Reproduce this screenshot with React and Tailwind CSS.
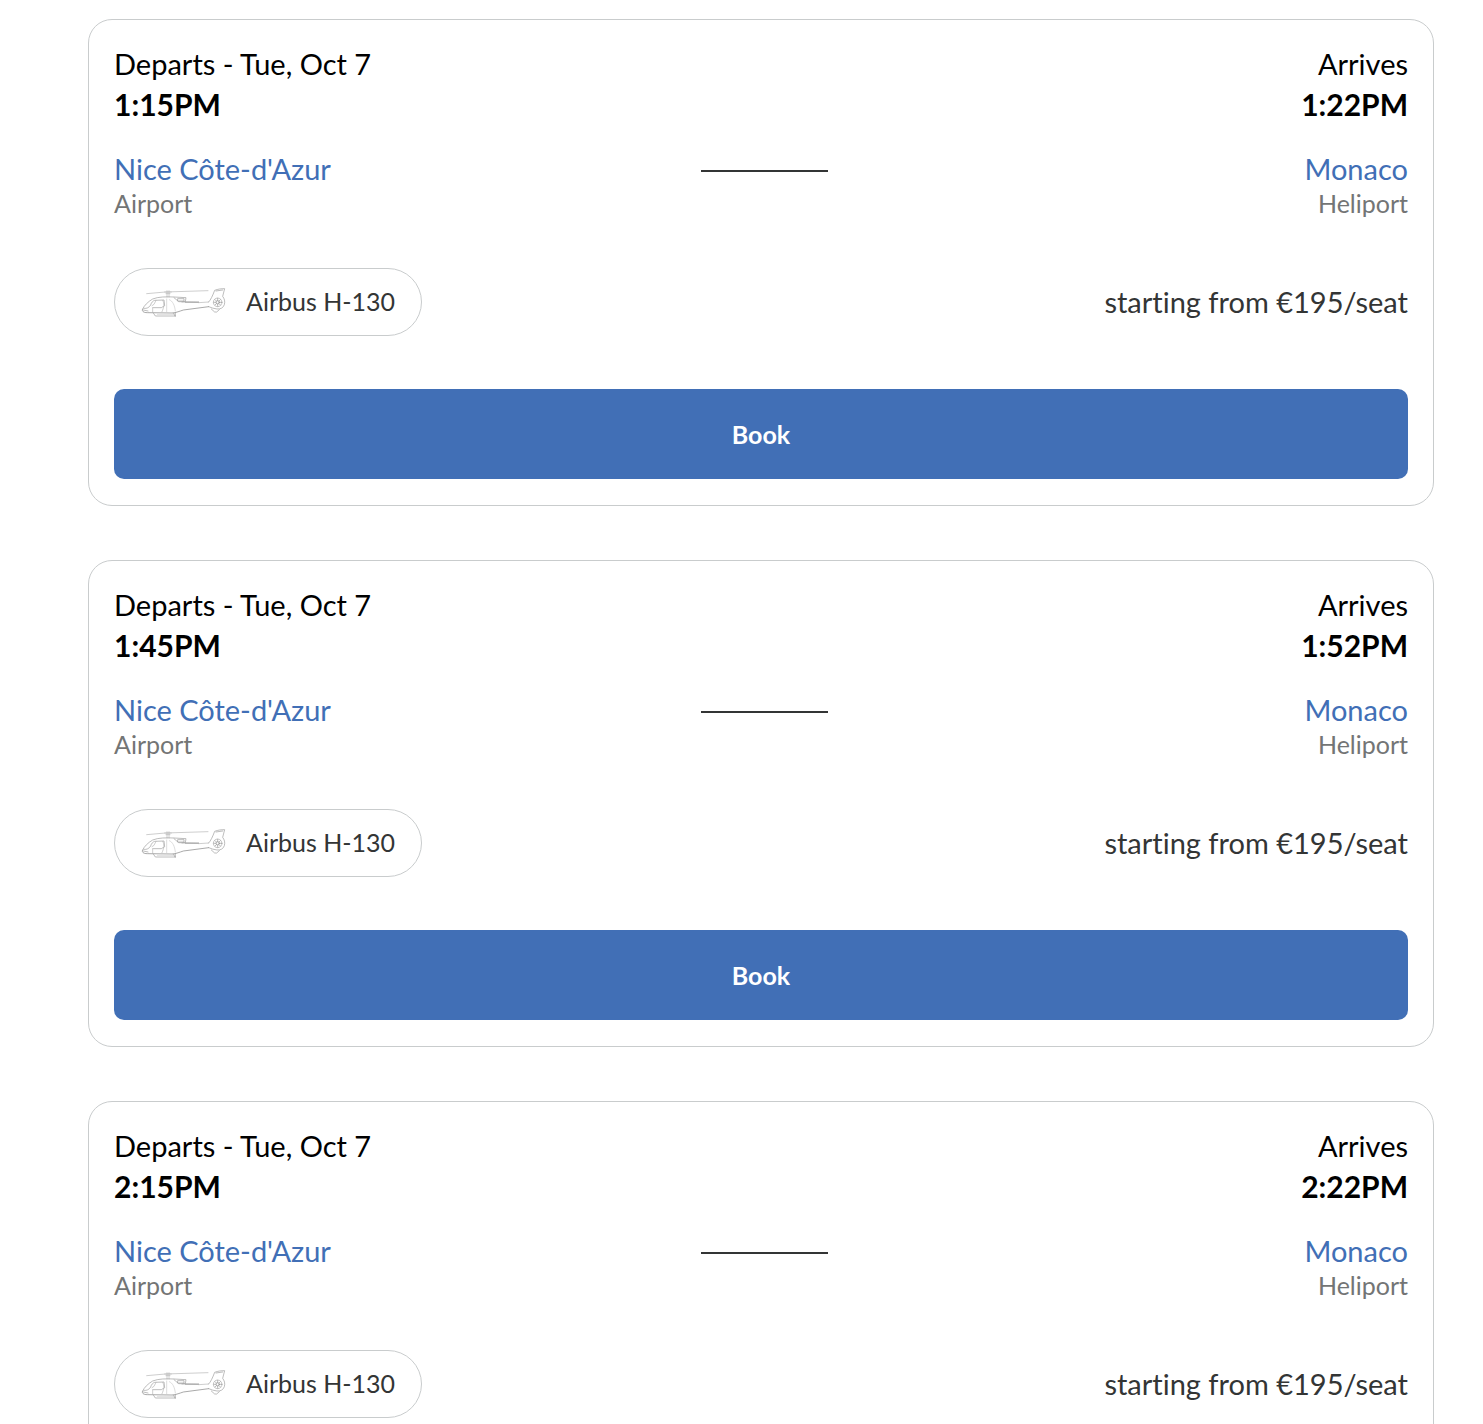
import React from 'react';

const flights = [
  { id: 1, departs: '1:15PM', arrives: '1:22PM' },
  { id: 2, departs: '1:45PM', arrives: '1:52PM' },
  { id: 3, departs: '2:15PM', arrives: '2:22PM' },
];

const HelicopterIcon = () => (
  <svg
    viewBox="24 -4 264 120"
    className="h-10 w-[88px] shrink-0"
    fill="none"
    stroke="#9c9c9c"
    strokeWidth="2"
    strokeLinecap="round"
    strokeLinejoin="round"
    aria-hidden="true"
  >
    {/* Main rotor */}
    <path d="M44 34 L100 29 L228 25" stroke="#b5b5b5" />
    <path d="M98 29 h20 M102 34 h12 M105 25 v19 M111 25 v19" stroke="#b5b5b5" />
    {/* Fuselage */}
    <path d="M32 80 C36 70 48 58 62 50 C78 43 104 43 126 44 L162 46 L160 58 L150 59" />
    <path d="M32 80 C28 86 34 91 46 91 L124 92 C134 90 142 87 154 83 L230 73" stroke="#7d7d7d" />
    <path d="M138 49 h18 v7 h-18 z M126 46 L140 58 L200 59" />
    <path d="M160 60 H200" stroke="#8c8c8c" />
    <path d="M200 61 L230 59" stroke="#b5b5b5" />
    {/* Windows and doors */}
    <path d="M36 78 C44 80 52 75 56 68 C58 61 62 56 68 54 L96 53 L98 70 L88 76 H62" />
    <path d="M72 54 L66 66 L60 70 M92 54 C98 62 96 76 90 88 M62 78 V90" stroke="#b5b5b5" />
    <path d="M112 52 C122 56 128 68 130 86 M104 50 V90" stroke="#cccccc" />
    <path d="M34 83 L48 86" />
    {/* Skids */}
    <path d="M64 92 L70 101 H130 M124 91 L129 101 M130 90 V101" />
    <path d="M76 96 H126" stroke="#cccccc" />
    {/* Tail and fenestron */}
    <path d="M230 59 C236 53 242 40 248 24 C258 20 268 19 278 19 L272 42 C277 49 280 57 277 67 C274 76 266 81 255 80 C246 79 237 76 230 73" />
    <path d="M252 26 L272 23 M238 80 L248 89 L254 89 L262 82" />
    <circle cx="257" cy="60" r="13" stroke="#aaaaaa" />
    <circle cx="257" cy="60" r="5" stroke="#888888" />
    <path d="M257 48 V55 M257 65 V72 M245 60 H252 M262 60 H269 M249 52 L253 56 M261 64 L265 68 M265 52 L261 56 M253 64 L249 68" />
  </svg>
);

const FlightCard = ({ flight }) => {
  return (
    <article className="rounded-3xl border border-[#c9cccd] px-[25px] pt-[25px] pb-[26px]">
      {/* Times */}
      <div className="flex justify-between text-black">
        <div>
          <p className="text-[29px] leading-[38px]">Departs - Tue, Oct 7</p>
          <p className="text-[30px] leading-[42px] font-bold">{flight.departs}</p>
        </div>
        <div className="text-right">
          <p className="text-[29px] leading-[38px]">Arrives</p>
          <p className="text-[30px] leading-[42px] font-bold">{flight.arrives}</p>
        </div>
      </div>

      {/* Route */}
      <div className="mt-[27px] grid grid-cols-[1fr_auto_1fr]">
        <div>
          <p className="text-[29px] leading-[34px] text-[#416fb6]">Nice Côte-d'Azur</p>
          <p className="text-[25px] leading-[34px] text-[#737575]">Airport</p>
        </div>
        <div className="flex h-[38px] items-center pl-[7px]">
          <div className="h-0.5 w-[127px] bg-[#333535]" />
        </div>
        <div className="text-right">
          <p className="text-[29px] leading-[34px] text-[#416fb6]">Monaco</p>
          <p className="text-[25px] leading-[34px] text-[#737575]">Heliport</p>
        </div>
      </div>

      {/* Aircraft and price */}
      <div className="mt-12 flex items-center justify-between text-[#333535]">
        <div className="flex h-[68px] items-center gap-[18px] rounded-full border border-[#c9cccd] pr-[26px] pb-0.5 pl-[25px]">
          <HelicopterIcon />
          <span className="text-[25px] leading-[34px]">Airbus H-130</span>
        </div>
        <p className="text-[29px] leading-[34px]">starting from €195/seat</p>
      </div>

      <button
        type="button"
        className="mt-[53px] h-[90px] w-full rounded-[10px] bg-[#416fb6] text-[25px] leading-[34px] font-bold text-white"
      >
        Book
      </button>
    </article>
  );
};

const App = () => {
  return (
    <main className="min-h-screen bg-white font-['Lato',sans-serif] [font-variant-ligatures:none]">
      <div className="flex flex-col gap-[54px] pt-[19px] pr-[49px] pb-[54px] pl-[88px]">
        {flights.map((flight) => (
          <FlightCard key={flight.id} flight={flight} />
        ))}
      </div>
    </main>
  );
};

export default App;
